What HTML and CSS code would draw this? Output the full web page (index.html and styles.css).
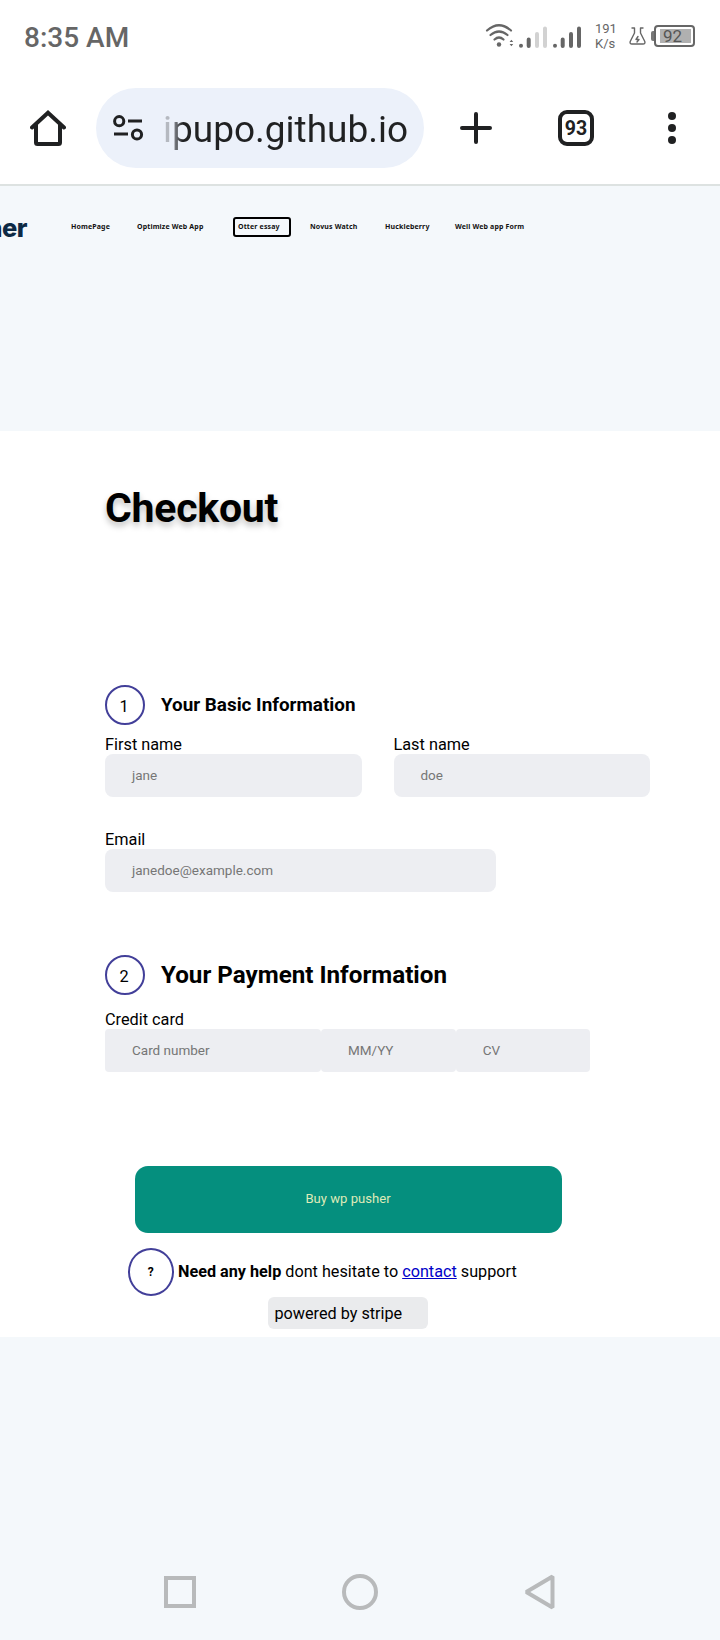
FILE: index.html
```html
<!DOCTYPE html>
<html lang="en">
<head>
<meta charset="utf-8">
<title>Checkout</title>
<link rel="stylesheet" href="styles.css">
</head>
<body>
<header class="status">
  <span class="clock">8:35 AM</span>
  <svg class="signals" width="98" height="32" viewBox="0 0 98 32" fill="none" stroke="#666" stroke-width="2.200" stroke-linecap="round">
    <path d="M2 10.500Q14 0 26 10.500M5.500 15Q14 8 22.500 15M9.500 19.500Q14 15.500 18.500 19.500"/>
    <circle cx="14" cy="24.500" r="2.200" fill="#666" stroke="none"/>
    <path d="M24.600 22l1.800-2.200 1.800 2.200zM24.600 24l1.800 2.200 1.800-2.200z" fill="#666" stroke="none"/>
    <g stroke-width="4">
      <path d="M36 25.700v0M43.700 19.500v6.500"/><path d="M52 14v12M60 8.500v17.500" stroke="#d2d2d2"/>
      <path d="M70 25.700v0M77.700 19.500v6.500M86 14v12M94 8.500v17.500"/>
    </g>
  </svg>
  <div class="rate"><span>191</span><span>K/s</span></div>
  <svg class="flask" width="17" height="18" viewBox="0 0 17 18" fill="none" stroke="#666" stroke-width="1.400" stroke-linecap="round" stroke-linejoin="round">
    <path d="M3 1h2.500v5L1.200 14.500Q.5 17 3 17H14Q16.500 17 15.800 14.500L11.500 6V1H14"/><path d="M9 9.500l-2 3h3l-2 2.500"/>
  </svg>
  <div class="battery"><span class="tip"></span><span class="cell"><span class="charge">92</span></span></div>
</header>
<div class="toolbar">
  <svg class="home" width="36" height="36" viewBox="0 0 36 36" fill="none" stroke="#202122" stroke-width="4" stroke-linecap="round" stroke-linejoin="miter">
    <path d="M2 17.500L18 2.800 34 17.500"/><path d="M6 15V32.500Q6 34 7.500 34H28.500Q30 34 30 32.500V15"/>
  </svg>
  <div class="address">
    <svg width="31" height="26" viewBox="0 0 31 26" fill="none" stroke="#202122" stroke-width="3">
      <circle cx="6.200" cy="6.200" r="4.600"/><path d="M15 6H29M1 19H15"/><circle cx="24" cy="19.500" r="4.600"/>
    </svg>
    <span class="url">ipupo.github.io</span>
  </div>
  <svg class="plus" width="34" height="34" viewBox="0 0 34 34" stroke="#202122" stroke-width="4" stroke-linecap="round"><path d="M17 3v28M3 17h28"/></svg>
  <div class="tabs">93</div>
  <svg class="more" width="8" height="32" viewBox="0 0 8 32" fill="#202122"><circle cx="4" cy="4" r="4"/><circle cx="4" cy="16" r="4"/><circle cx="4" cy="28" r="4"/></svg>
</div>
<nav class="nav">
  <span class="brand">Pusher</span>
  <a class="n1">HomePage</a>
  <a class="n2">Optimize Web App</a>
  <a class="n3">Otter essay</a>
  <a class="n4">Novus Watch</a>
  <a class="n5">Huckleberry</a>
  <a class="n6">Well Web app Form</a>
</nav>
<main class="checkout">
  <h1>Checkout</h1>
  <section class="basic">
    <div class="step"><span class="num">1</span><h3>Your Basic Information</h3></div>
    <div class="names">
      <div class="field"><label>First name</label><div class="input"><span>jane</span></div></div>
      <div class="field"><label>Last name</label><div class="input"><span>doe</span></div></div>
    </div>
    <div class="field email"><label>Email</label><div class="input"><span>janedoe@example.com</span></div></div>
  </section>
  <section class="payment">
    <div class="step"><span class="num">2</span><h2>Your Payment Information</h2></div>
    <div class="field credit"><label>Credit card</label>
      <div class="cards"><div class="input"><span>Card number</span></div><div class="input"><span>MM/YY</span></div><div class="input"><span>CV</span></div></div>
    </div>
  </section>
  <div class="buy">Buy wp pusher</div>
  <div class="help"><span class="q">?</span><p><b>Need any help</b> dont hesitate to <a class="contact">contact</a> support</p></div>
  <div class="powered"><span>powered by stripe</span></div>
</main>
<footer class="system">
  <svg width="32" height="32" viewBox="0 0 32 32" fill="none" stroke="#b8babb" stroke-width="4"><path d="M2 2h28v28H2z"/></svg>
  <svg width="36" height="36" viewBox="0 0 36 36" fill="none" stroke="#b8babb" stroke-width="4"><circle cx="18" cy="18" r="16"/></svg>
  <svg width="31" height="36" viewBox="0 0 31 36" fill="none" stroke="#b8babb" stroke-width="4" stroke-linejoin="bevel"><path d="M28.500 2.500v31L2.300 18z"/></svg>
</footer>
</body>
</html>
```
FILE: styles.css
```css
* { box-sizing: border-box; }
body { margin: 0; width: 720px; height: 1640px; overflow: hidden; background: #f4f8fb; font-family: Roboto, sans-serif; color: #000; display: flex; flex-direction: column; }
h1, h2, h3, p { margin: 0; }
svg { display: block; flex: none; }
.status { height: 80px; background: #fff; display: flex; align-items: flex-start; padding: 20px 0 0 24px; color: #666; }
.clock { width: 461px; font-size: 28px; font-weight: 500; line-height: 36px; white-space: nowrap; }
.rate { width: 47px; margin-left: 12px; display: flex; flex-direction: column; font-size: 13px; line-height: 15px; margin-top: 1px; }
.flask { margin-top: 7px; margin-left: -13px; }
.battery { display: flex; align-items: center; margin: 5px 0 0 5px; }
.tip { width: 3px; height: 10px; background: #777; border-radius: 2px 0 0 2px; }
.cell { width: 41px; height: 22px; border: 2px solid #666; border-radius: 4px; padding: 2px; }
.charge { display: block; height: 14px; margin-left: 2px; background: #b0b0b0; font-size: 17px; line-height: 14px; padding-left: 3px; color: #555; }
.toolbar { height: 106px; background: #fff; border-bottom: 2px solid #dde2e1; display: flex; align-items: flex-start; padding-left: 30px; }
.home { margin-top: 30px; }
.address { width: 328px; height: 80px; margin: 8px 0 0 30px; border-radius: 40px; background: #ecf1fa; display: flex; align-items: center; padding-left: 17px; color: #202122; }
.url { margin: 4px 0 0 19px; font-size: 37px; line-height: 46px; white-space: nowrap; background: linear-gradient(90deg, #b5b9c0 6px, #777a80 12px, #202122 20px); -webkit-background-clip: text; background-clip: text; color: transparent; }
.plus { margin: 31px 0 0 35px; }
.tabs { width: 36px; height: 36px; margin: 30px 0 0 65px; border: 4px solid #202122; border-radius: 9px; font-size: 19.500px; line-height: 29px; font-weight: 700; text-align: center; color: #202122; }
.more { margin: 32px 0 0 74px; }
.nav { height: 245px; padding-top: 31px; display: flex; align-items: flex-start; font-family: "Noto Sans", sans-serif; font-size: 7px; letter-spacing: .14px; line-height: 20px; font-weight: 700; color: #111; white-space: nowrap; }
.brand { width: 71px; padding-right: 44px; direction: rtl; font-family: Inter, sans-serif; font-size: 25.500px; letter-spacing: -.5px; line-height: 21px; font-weight: 800; color: #0d2a45; display: flex; }
.nav a { flex: none; }
.n1 { width: 66px; }
.n2 { width: 96px; }
.n3 { width: 58px; height: 20px; border: 2px solid #000; border-radius: 3px; padding-left: 3px; line-height: 16px; margin-right: 19px; }
.n4 { width: 75px; }
.n5 { width: 70px; }
.checkout { height: 906px; background: #fff; padding-left: 105px; padding-top: 53px; display: flex; flex-direction: column; }
h1 { height: 201px; font-size: 41px; letter-spacing: -.25px; line-height: 48px; text-shadow: 0 4px 6px rgba(0,0,0,.25); }
.basic { height: 270px; }
.step { display: flex; align-items: center; height: 40px; gap: 16px; }
.num { width: 40px; height: 40px; border: 2px solid #423f99; border-radius: 50%; font-size: 16.300px; line-height: 39px; text-align: center; padding-right: 2px; }
h3 { font-size: 18.850px; line-height: 38px; }
h2 { font-size: 24.200px; line-height: 40px; }
.names { display: flex; gap: 32px; padding-top: 10px; }
label { display: block; height: 19px; font-size: 16.300px; line-height: 20px; }
.input { width: 256.500px; height: 43px; border-radius: 8px; background: #edeef2; padding-left: 27px; font-size: 13.500px; line-height: 43px; color: #767676; }
.email { padding-top: 33px; }
.email .input { width: 391px; }
.payment { height: 211px; }
.credit { padding-top: 15px; }
.cards { display: flex; }
.cards .input { width: 134.700px; border-radius: 4px; }
.cards .input:first-child { width: 216px; }
.buy { width: 427px; height: 67px; margin-left: 29.500px; border-radius: 13px; background: #058f7e; color: #dfeab8; text-align: center; font-size: 13.100px; line-height: 65px; }
.help { height: 64px; padding: 15px 0 0 22.500px; display: flex; gap: 4px; font-size: 16.220px; line-height: 48px; white-space: nowrap; }
.q { width: 46.500px; height: 48px; border: 2px solid #423f99; border-radius: 50%; font-size: 12px; font-weight: 700; line-height: 45px; text-align: center; }
.contact { color: #0000c8; text-decoration: underline; }
.powered { width: 160px; height: 32px; margin-left: 163px; border-radius: 6px; background: #eaebed; font-size: 16.220px; line-height: 33px; padding-left: 6.500px; white-space: nowrap; }
.system { flex: 1; display: flex; align-items: center; justify-content: space-between; padding: 206px 165px 0 164px; }
```
